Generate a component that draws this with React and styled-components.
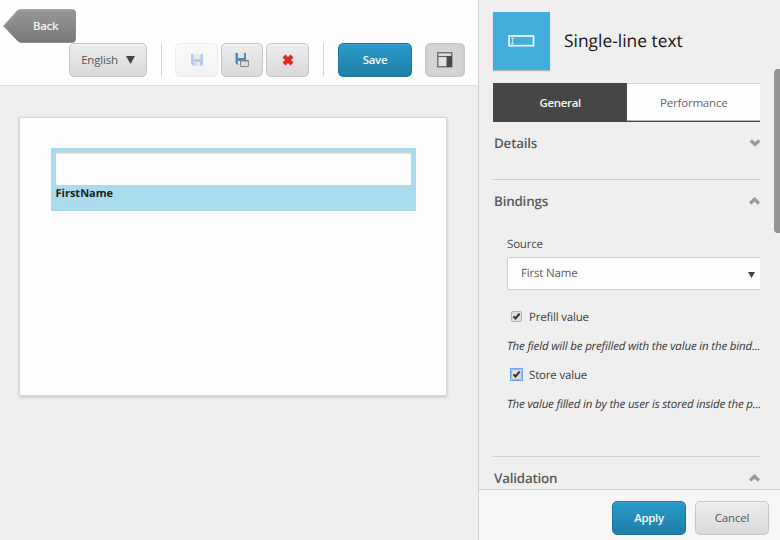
import React from "react";
import styled, { createGlobalStyle, css } from "styled-components";

const GlobalStyle = createGlobalStyle`
  * { box-sizing: border-box; }
  body {
    margin: 0;
    background: #efefef;
    font-family: "Open Sans", "Noto Sans", sans-serif;
    font-size: 11.5px;
    letter-spacing: -0.18px;
    color: #4a4a4a;
    text-rendering: geometricPrecision;
  }
`;

const Page = styled.div`
  display: grid;
  grid-template-columns: 478px 302px;
  width: 780px;
  height: 540px;
  overflow: hidden;
`;

const Editor = styled.main`
  display: flex;
  flex-direction: column;
`;

const Header = styled.header`
  height: 86px;
  padding: 9px 0 0 3px;
  background: #fefefe;
  border-bottom: 1px solid #dfdfdf;
`;

const BackButton = styled.button`
  display: block;
  width: 73px;
  height: 34px;
  padding: 0;
  border: 0;
  background: none;
`;

const BackLabel = styled.text`
  font: 600 11.5px "Open Sans", "Noto Sans", sans-serif;
  letter-spacing: -0.35px;
  fill: #f4f4f4;
`;

const Toolbar = styled.div`
  display: flex;
  height: 33px;
  padding-left: 66px;
`;

const variants = {
  plain: css`
    color: #555;
    border-color: #c6c6c6;
    background: linear-gradient(#ededed, #d9d9d9);
    box-shadow: inset 0 1px 0 #f4f4f4;
  `,
  faded: css`
    border-color: #ececec;
    background: linear-gradient(#fafafa, #f3f3f3);
  `,
  primary: css`
    color: #f4fafc;
    font-weight: 600;
    letter-spacing: -0.35px;
    border-color: #1c7699;
    background: linear-gradient(#289bcb, #1f7ea6);
    box-shadow: inset 0 1px 0 #3ba5d0;
  `,
  pressed: css`
    border-color: #c9c9c9;
    background: #d5d5d5;
    box-shadow: inset 0 0 4px #c4c4c4;
  `,
};

const Button = styled.button`
  display: flex;
  align-items: center;
  justify-content: center;
  gap: 8px;
  width: ${(p) => p.$width}px;
  height: 34px;
  margin-left: ${(p) => p.$gap || 0}px;
  padding: 0 0 1px;
  border: 1px solid;
  border-radius: 5px;
  font: 11.5px "Open Sans", "Noto Sans", sans-serif;
  letter-spacing: -0.2px;
  ${(p) => variants[p.$variant || "plain"]}
`;

const Divider = styled.span`
  width: 1px;
  height: 33px;
  margin-left: 14px;
  background: #d2d2d2;
`;

const Canvas = styled.section`
  width: 428px;
  height: 279px;
  margin: 31px 0 0 19px;
  padding: 30px 30px 0 31px;
  background: #fefefe;
  border: 1px solid #d9d9d9;
  box-shadow: 0 1px 3px rgba(0, 0, 0, 0.2);
`;

const SelectedField = styled.div`
  width: 365px;
  height: 63px;
  padding: 4px 4px 0 4px;
  background: #a9daee;
`;

const FieldInput = styled.div`
  height: 34px;
  background: #fefefe;
  border: 1px solid #c9d1d4;
  box-shadow: inset 0 1px 1px #e4e4e4;
`;

const FieldLabel = styled.div`
  padding: 1px 0 0 0.5px;
  font-size: 11px;
  font-weight: 700;
  letter-spacing: 0;
  line-height: 14px;
  color: #1b1f21;
`;

const Panel = styled.aside`
  display: flex;
  flex-direction: column;
  height: 540px;
  border-left: 1px solid #d0d0d0;
`;

const PanelScroll = styled.div`
  display: flex;
  justify-content: space-between;
  height: 489px;
  overflow: hidden;
`;

const PanelBody = styled.div`
  width: 267px;
  margin-left: 14px;
`;

const ScrollThumb = styled.div`
  width: 6px;
  height: 164px;
  margin-top: 69px;
  background: #949494;
  border-radius: 4px 0 0 4px;
`;

const TitleRow = styled.div`
  display: flex;
  align-items: center;
  gap: 14px;
  height: 58px;
  margin-top: 12px;
`;

const TypeTile = styled.div`
  display: flex;
  align-items: center;
  justify-content: center;
  width: 57px;
  height: 58px;
  background: #41aedc;
  box-shadow: 0 1px 1px #b8b8b8;
`;

const Title = styled.h1`
  margin: 0;
  font-size: 17.4px;
  font-weight: 400;
  letter-spacing: 0;
  line-height: 24px;
  color: #141414;
`;

const Tabs = styled.div`
  display: flex;
  height: 39px;
  margin-top: 13px;
  background: #fefefe;
  border-top: 1px solid #dadada;
  border-bottom: 1px solid #464646;
`;

const Tab = styled.button`
  flex: 1;
  padding: 0 0 0 1px;
  border: 0;
  font: ${(p) => (p.$active ? 600 : 400)} 11.5px "Open Sans", "Noto Sans", sans-serif;
  letter-spacing: ${(p) => (p.$active ? -0.35 : -0.2)}px;
  color: ${(p) => (p.$active ? "#f6f6f6" : "#666")};
  background: ${(p) => (p.$active ? "#464646" : "#fefefe")};
  box-shadow: ${(p) => (p.$active ? "0 -1px 0 #464646" : "inset 0 -1px 0 #b5b5b5")};
`;

const Section = styled.section`
  height: ${(p) => p.$height}px;
  border-bottom: 1px solid #d0d0d0;
`;

const SectionHeader = styled.div`
  display: flex;
  align-items: center;
  justify-content: space-between;
  height: 42px;
  padding-left: 1px;
`;

const SectionTitle = styled.h2`
  margin: 0;
  font-size: 13.4px;
  font-weight: 600;
  letter-spacing: -0.2px;
  line-height: 20px;
  color: #5a5a5a;
`;

const Fields = styled.div`
  display: flex;
  flex-direction: column;
  padding: 14px 0 0 14px;
`;

const SourceLabel = styled.label`
  height: 21px;
  line-height: 18px;
`;

const Select = styled.div`
  display: flex;
  align-items: center;
  justify-content: space-between;
  height: 33px;
  padding: 0 5px 1px 13px;
  background: #fefefe;
  border: 1px solid #cecece;
  border-right: 0;
  border-radius: 2px 0 0 2px;
  color: #5c5c5c;
`;

const SelectArrow = styled.span`
  padding-top: 3px;
`;

const CheckRow = styled.label`
  display: flex;
  align-items: center;
  height: 18px;
  margin-top: ${(p) => p.$gap}px;
  padding-left: 3px;
  gap: 6px;
  color: #404040;
`;

const CheckBox = styled.span`
  display: flex;
  align-items: center;
  justify-content: center;
  width: 13px;
  height: 13px;
  margin-bottom: 1px;
  border: 1px solid ${(p) => (p.$focused ? "#6fa1f4" : "transparent")};
`;

const Hint = styled.p`
  height: 18px;
  margin: ${(p) => p.$gap}px 0 0;
  font-style: italic;
  letter-spacing: -0.165px;
  line-height: 19px;
  color: #383838;
  white-space: nowrap;
`;

const Footer = styled.footer`
  display: flex;
  height: 51px;
  padding: 11px 11px 0 0;
  justify-content: flex-end;
  background: #f7f7f7;
  border-top: 1px solid #d2d2d2;
`;

const Icon = styled.svg`
  display: block;
  flex: none;
`;

const BackShape = () => (
  <Icon width="73" height="34" viewBox="0 0 73 34">
    <defs>
      <linearGradient id="backFill" x1="0" y1="0" x2="0" y2="1">
        <stop offset="0" stopColor="#979797" />
        <stop offset="1" stopColor="#787878" />
      </linearGradient>
    </defs>
    <path d="M.6 17 14 2.2Q15.5.7 17.5.7H69Q72.5.7 72.5 4V30Q72.5 33.4 69 33.4H18Q16.500 33.4 15 32Z" fill="url(#backFill)" stroke="#7c7c7c" strokeWidth=".8" />
    <path d="M2 16 15 2.500Q16 1.700 18 1.700H69" fill="none" stroke="#a3a3a3" strokeWidth=".8" />
    <BackLabel x="30" y="21.300">Back</BackLabel>
  </Icon>
);

const Triangle = ({ width, height }) => (
  <Icon width={width} height={height} viewBox="0 0 10 9" preserveAspectRatio="none">
    <path d="M0 0H10L5 9Z" fill="#444" />
  </Icon>
);

const Floppy = () => (
  <Icon width="12" height="13" viewBox="0 0 12 13">
    <path d="M0 1H12V12.500H1.500L0 11Z" fill="#b5cae4" />
    <path d="M2.500 .8H9.500V6H2.500Z" fill="#ebebe9" />
    <path d="M3 9H9V12.500H3Z" fill="#e7eef6" />
    <path d="M4 10H5.500V12H4Z" fill="#b5cae4" />
  </Icon>
);

const FloppyWindow = () => (
  <Icon width="14" height="14" viewBox="0 0 14 14">
    <path d="M.5 0H11V11.500H1.500L.5 10.500Z" fill="#4f87c3" />
    <path d="M3 0H9V5H3Z" fill="#e6e4de" />
    <path d="M3 8H7V11.500H3Z" fill="#e6edf4" />
    <rect x="5.500" y="7.500" width="8" height="6" rx=".5" fill="#ddd" stroke="#858585" />
    <path d="M5.500 8H13.500" stroke="#858585" />
  </Icon>
);

const Cross = () => (
  <Icon width="12" height="12" viewBox="0 0 12 12">
    <path d="M2 2 10 10M10 2 2 10" stroke="#e0291f" strokeWidth="4.200" />
  </Icon>
);

const Layout = () => (
  <Icon width="16" height="16" viewBox="0 0 16 16">
    <rect x=".8" y=".8" width="14" height="14" fill="#e2e2e2" stroke="#5c5c5c" strokeWidth="1.200" />
    <path d="M1 4.500H15" stroke="#5c5c5c" strokeWidth="1.200" />
    <path d="M9.500 4.500H15V15H9.500Z" fill="#484848" />
  </Icon>
);

const TextInputIcon = () => (
  <Icon width="27" height="12" viewBox="0 0 27 12">
    <rect x="1" y="1" width="24.500" height="9.700" fill="none" stroke="#f3fafd" strokeWidth="1.700" />
    <path d="M3 3.300H6M3 8.700H6M4.500 3.300V8.700" stroke="#d5eef8" strokeWidth=".9" />
  </Icon>
);

const Chevron = ({ down }) => (
  <Icon width="11" height="9" viewBox="0 0 11 9">
    <path d={down ? "M1.800 1.500 6 5.500 10.200 1.500" : "M1.100 6.500 5.500 2.300 9.900 6.500"} fill="none" stroke="#999" strokeWidth="3.200" />
  </Icon>
);

const Check = () => (
  <Icon width="11" height="11" viewBox="0 0 11 11">
    <rect x=".5" y=".5" width="10" height="10" rx="1.500" fill="#dedede" stroke="#b3b3b3" />
    <path d="M2.500 5.300 4.500 7.500 8.600 2.600" fill="none" stroke="#333" strokeWidth="2" />
  </Icon>
);

const SectionHead = ({ title, down }) => (
  <SectionHeader>
    <SectionTitle>{title}</SectionTitle>
    <Chevron down={down} />
  </SectionHeader>
);

export default function App() {
  return (
    <Page>
      <GlobalStyle />
      <Editor>
        <Header>
          <BackButton><BackShape /></BackButton>
          <Toolbar>
            <Button $width={78}>English <Triangle width={9} height={8} /></Button>
            <Divider />
            <Button $width={43} $gap={13} $variant="faded"><Floppy /></Button>
            <Button $width={42} $gap={3}><FloppyWindow /></Button>
            <Button $width={43} $gap={3}><Cross /></Button>
            <Divider />
            <Button $width={74} $gap={14} $variant="primary">Save</Button>
            <Button $width={40} $gap={13} $variant="pressed"><Layout /></Button>
          </Toolbar>
        </Header>
        <Canvas>
          <SelectedField>
            <FieldInput />
            <FieldLabel>FirstName</FieldLabel>
          </SelectedField>
        </Canvas>
      </Editor>
      <Panel>
        <PanelScroll>
          <PanelBody>
            <TitleRow>
              <TypeTile><TextInputIcon /></TypeTile>
              <Title>Single-line text</Title>
            </TitleRow>
            <Tabs>
              <Tab $active>General</Tab>
              <Tab>Performance</Tab>
            </Tabs>
            <Section $height={58}>
              <SectionHead title="Details" down />
            </Section>
            <Section $height={277}>
              <SectionHead title="Bindings" />
              <Fields>
                <SourceLabel>Source</SourceLabel>
                <Select>First Name <SelectArrow><Triangle width={7} height={6} /></SelectArrow></Select>
                <CheckRow $gap={18}><CheckBox><Check /></CheckBox>Prefill value</CheckRow>
                <Hint $gap={11}>The field will be prefilled with the value in the bind...</Hint>
                <CheckRow $gap={11}><CheckBox $focused><Check /></CheckBox>Store value</CheckRow>
                <Hint $gap={11}>The value filled in by the user is stored inside the p...</Hint>
              </Fields>
            </Section>
            <SectionHead title="Validation" />
          </PanelBody>
          <ScrollThumb />
        </PanelScroll>
        <Footer>
          <Button $width={74} $variant="primary">Apply</Button>
          <Button $width={74} $gap={9}>Cancel</Button>
        </Footer>
      </Panel>
    </Page>
  );
}
